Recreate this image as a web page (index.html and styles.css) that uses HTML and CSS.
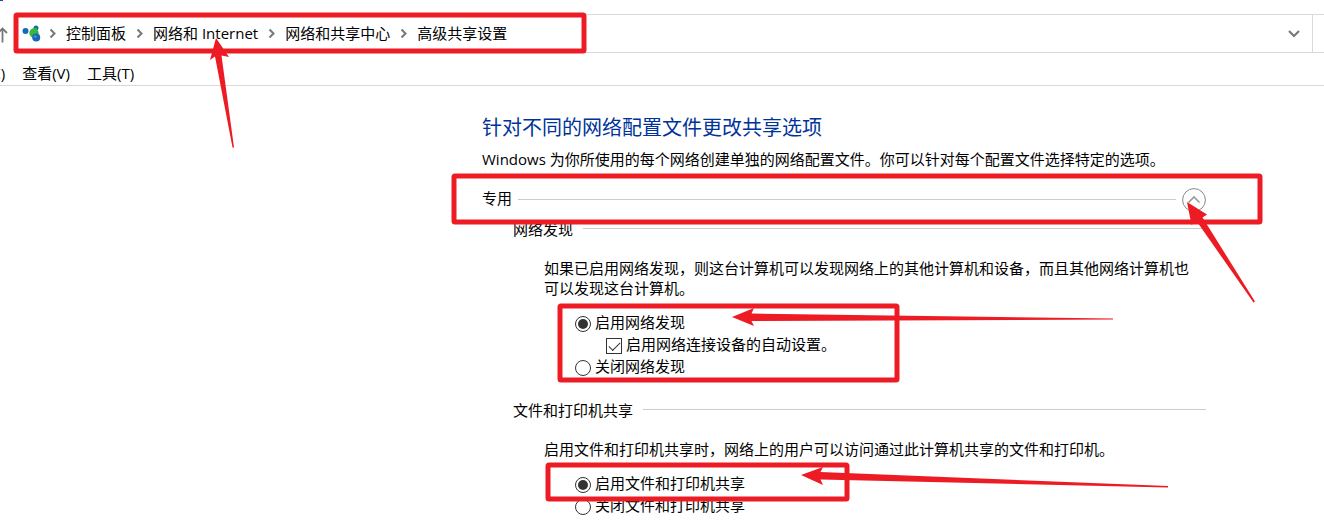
FILE: index.html
```html
<!DOCTYPE html>
<html lang="zh-CN">
<head>
    <meta charset="utf-8">
    <meta name="viewport" content="width=device-width, initial-scale=1.0">
    <title>高级共享设置</title>
    <link rel="stylesheet" href="styles.css">
</head>
<body>
    <header class="toolbar">
        <button type="button" class="up-button" aria-label="上移">
            <svg width="8" height="16" viewBox="0 0 8 16"><path d="M2.500 15.500V2M-3 7l5.500-5.500L7 6" fill="none" stroke="#777" stroke-width="1.800"/></svg>
        </button>
        <nav class="address-bar">
            <svg class="network-icon" width="19" height="18" viewBox="0 0 19 18">
                <circle cx="3.500" cy="6" r="3" fill="#1469b8"/>
                <circle cx="14" cy="3" r="2.500" fill="#176fa8"/>
                <circle cx="12" cy="8" r="4.700" fill="#35b83c"/>
                <path d="M11 4.500q3-2 4-1v7h-4z" fill="#35b83c"/>
                <circle cx="14.200" cy="12.500" r="4" fill="#1767b8"/>
                <circle cx="13.300" cy="11.500" r="1.300" fill="#4a96d8"/>
            </svg>
            <svg class="crumb-arrow" width="5" height="9" viewBox="0 0 5 9"><path d="M.5.500l4 4-4 4"/></svg>
            <a href="#" class="crumb">控制面板</a>
            <svg class="crumb-arrow" width="5" height="9" viewBox="0 0 5 9"><path d="M.5.500l4 4-4 4"/></svg>
            <a href="#" class="crumb">网络和 Internet</a>
            <svg class="crumb-arrow" width="5" height="9" viewBox="0 0 5 9"><path d="M.5.500l4 4-4 4"/></svg>
            <a href="#" class="crumb">网络和共享中心</a>
            <svg class="crumb-arrow" width="5" height="9" viewBox="0 0 5 9"><path d="M.5.500l4 4-4 4"/></svg>
            <a href="#" class="crumb">高级共享设置</a>
            <button type="button" class="history-button" aria-label="以前的位置">
                <svg width="12" height="8" viewBox="0 0 12 8"><path d="M1 1l5 5 5-5" fill="none" stroke="#777" stroke-width="2"/></svg>
            </button>
        </nav>
        <div class="refresh"></div>
    </header>

    <nav class="menu">
        <button type="button" class="menu-item menu-item-cut">(E)</button>
        <button type="button" class="menu-item">查看(V)</button>
        <button type="button" class="menu-item">工具(T)</button>
    </nav>

    <main class="content">
        <h1 class="title">针对不同的网络配置文件更改共享选项</h1>
        <p class="intro">Windows 为你所使用的每个网络创建单独的网络配置文件。你可以针对每个配置文件选择特定的选项。</p>

        <div class="profile">
            <h2 class="profile-name">专用</h2>
            <span class="rule"></span>
            <button type="button" class="collapse" aria-label="折叠">
                <svg width="24" height="24" viewBox="0 0 24 24" fill="none">
                    <circle cx="12" cy="12" r="11.400" stroke="#888"/>
                    <path d="M6.500 14.500L12 9l5.500 5.500" stroke="#999" stroke-width="1.600"/>
                </svg>
            </button>
        </div>

        <section class="group">
            <div class="group-head">
                <h3 class="group-name">网络发现</h3>
                <span class="rule"></span>
            </div>
            <p class="group-text">如果已启用网络发现，则这台计算机可以发现网络上的其他计算机和设备，而且其他网络计算机也可以发现这台计算机。</p>
            <div class="options">
                <label class="option"><input type="radio" name="discovery" class="radio" checked>启用网络发现</label>
                <label class="option option-sub"><input type="checkbox" class="checkbox" checked>启用网络连接设备的自动设置。</label>
                <label class="option"><input type="radio" name="discovery" class="radio">关闭网络发现</label>
            </div>
        </section>

        <section class="group">
            <div class="group-head">
                <h3 class="group-name">文件和打印机共享</h3>
                <span class="rule"></span>
            </div>
            <p class="group-text">启用文件和打印机共享时，网络上的用户可以访问通过此计算机共享的文件和打印机。</p>
            <div class="options">
                <label class="option"><input type="radio" name="sharing" class="radio" checked>启用文件和打印机共享</label>
                <label class="option"><input type="radio" name="sharing" class="radio">关闭文件和打印机共享</label>
            </div>
        </section>
    </main>

    <!-- Red boxes and arrows over the window -->
    <svg class="marks" width="1324" height="523" viewBox="0 0 1324 523" aria-hidden="true">
        <path d="M0 0h3v1H0z" fill="#1b4fa0"/>
        <g class="mark-box">
            <rect x="16" y="15" width="568" height="36" rx="1"/>
            <rect x="454" y="176" width="806" height="46" rx="1"/>
            <rect x="560" y="306" width="337" height="74" rx="1"/>
            <rect x="548" y="465" width="299" height="34" rx="1"/>
        </g>
        <g class="mark-arrow">
            <path d="M216 38L229 57 221.500 55.500 234 147.500 232.500 147.500 215 56.500 210 60z"/>
            <path d="M1187 202L1207 214.500 1202.500 217.500 1255 301.500 1253.500 302.500 1196.500 221 1191.500 225z"/>
            <path d="M732 317L754 308 751.500 313.500 1113 318.500 1113 319.500 751.500 321 754 326z"/>
            <path d="M801 475L823 467 820.500 472 1168 486 1168 487.500 820.500 479.500 823 485z"/>
        </g>
    </svg>
</body>
</html>
```

FILE: styles.css
```css
/* General Styles */
* {
    box-sizing: border-box;
}
body {
    position: relative;
    margin: 0;
    height: 100vh;
    overflow: hidden;
    background-color: #ffffff;
    color: #000000;
    font-family: "Open Sans", "Noto Sans CJK SC", sans-serif;
    font-size: 15px;
    line-height: 20px;
}
h1, h2, h3, p {
    margin: 0;
    font-weight: normal;
}
button {
    padding: 0;
    border: none;
    background: none;
    color: inherit;
    font: inherit;
}
svg {
    display: block;
    flex: none;
}
/* Address Bar */
.toolbar {
    display: flex;
    align-items: stretch;
    height: 39px;
    margin-top: 14px;
}
.up-button {
    width: 14px;
}
.up-button svg {
    margin-top: 2px;
}
.address-bar {
    display: flex;
    flex: 1;
    align-items: center;
    padding-left: 7px;
    border: 1px solid #d9d9d9;
    white-space: nowrap;
}
.network-icon {
    margin-right: -2px;
}
.crumb-arrow {
    margin: 0 11px;
    overflow: visible;
    fill: none;
    stroke: #777777;
    stroke-width: 2;
}
.crumb {
    padding-bottom: 2px;
    color: #000000;
    text-decoration: none;
}
.history-button {
    margin-left: auto;
    padding: 0 12px;
}
.refresh {
    width: 11px;
    border: solid #d9d9d9;
    border-width: 1px 0;
}
/* Menu */
.menu {
    display: flex;
    gap: 17px;
    padding: 9px 0 1px;
    border-bottom: 1px solid #d9d9d9;
    line-height: 22px;
}
.menu-item-cut {
    margin-left: -12px;
}
/* Settings */
.content {
    max-width: 1206px;
    padding: 28px 0 0 482px;
}
.title {
    margin-bottom: 7px;
    color: #003399;
    font-size: 20px;
    line-height: 28px;
}
.profile {
    display: flex;
    align-items: center;
    gap: 6px;
    margin-top: 19px;
}
.profile-name, .group-name {
    align-self: flex-start;
    font-size: 15px;
}
.rule {
    flex: 1;
    height: 1px;
    margin-bottom: 2px;
    background-color: #cccccc;
}
.collapse {
    width: 24px;
    height: 24px;
}
.group {
    padding: 7px 0 16px 31px;
}
.group-head {
    display: flex;
    align-items: center;
    gap: 10px;
}
.group-text {
    padding: 19px 16px 0 31px;
}
.options {
    display: flex;
    flex-direction: column;
    padding: 13px 0 0 62px;
}
.option {
    display: flex;
    align-items: center;
    gap: 4px;
    line-height: 22px;
}
.option-sub {
    padding-left: 31px;
}
.radio, .checkbox {
    appearance: none;
    width: 16px;
    height: 16px;
    margin: 3px 0 0;
    border: 1px solid #333333;
    background-color: #ffffff;
}
.radio {
    border-radius: 50%;
}
.radio:checked {
    padding: 2px;
    background-color: #333333;
    background-clip: content-box;
}
.checkbox:checked::before {
    content: "";
    display: block;
    width: 10px;
    height: 5px;
    margin: 3px 2px;
    border: solid #333333;
    border-width: 0 0 1px 1px;
    transform: rotate(-45deg);
}
/* Marks */
.marks {
    position: absolute;
    top: 0;
    left: 0;
    pointer-events: none;
}
.mark-box {
    fill: none;
    stroke: #ed1c24;
    stroke-width: 5;
}
.mark-arrow {
    fill: #ed1c24;
}
```
